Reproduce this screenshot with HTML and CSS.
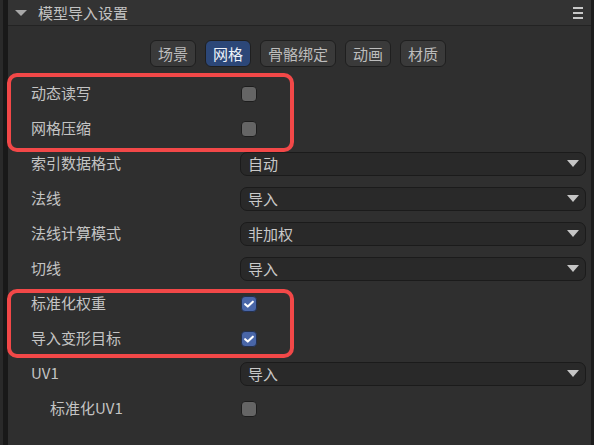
FILE: index.html
```html
<!DOCTYPE html>
<html lang="zh">
<head>
<meta charset="utf-8">
<link rel="stylesheet" href="styles.css">
</head>
<body>
<div class="frame">
  <div class="edge-left"></div>
  <div class="panel">
    <div class="header">
      <span class="caret"></span>
      <span class="title">模型导入设置</span>
      <span class="menu"><i></i><i></i><i></i></span>
    </div>
    <div class="content">
      <div class="tabs">
        <span class="tab">场景</span>
        <span class="tab active">网格</span>
        <span class="tab">骨骼绑定</span>
        <span class="tab">动画</span>
        <span class="tab">材质</span>
      </div>
      <div class="rows">
        <div class="row"><span class="label">动态读写</span><span class="check"></span></div>
        <div class="row"><span class="label">网格压缩</span><span class="check"></span></div>
        <div class="row"><span class="label">索引数据格式</span><span class="select">自动<b></b></span></div>
        <div class="row"><span class="label">法线</span><span class="select">导入<b></b></span></div>
        <div class="row"><span class="label">法线计算模式</span><span class="select">非加权<b></b></span></div>
        <div class="row"><span class="label">切线</span><span class="select">导入<b></b></span></div>
        <div class="row"><span class="label">标准化权重</span><span class="check on"><svg viewBox="0 0 16 16"><path d="M3.6 8.2 L6.6 10.9 L12.4 5.3" /></svg></span></div>
        <div class="row"><span class="label">导入变形目标</span><span class="check on"><svg viewBox="0 0 16 16"><path d="M3.6 8.2 L6.6 10.9 L12.4 5.3" /></svg></span></div>
        <div class="row"><span class="label">UV1</span><span class="select">导入<b></b></span></div>
        <div class="row"><span class="label indent">标准化UV1</span><span class="check"></span></div>
      </div>
    </div>
  </div>
  <div class="edge-right"></div>
</div>
<div class="mark mark1"></div>
<div class="mark mark2"></div>
</body>
</html>
```
FILE: styles.css
```css
html, body {
  margin: 0;
  padding: 0;
  background: #2e2e2e;
  font-family: "Noto Sans CJK SC", "Noto Sans", sans-serif;
  color: #c4c4c4;
  font-size: 15px;
}
.frame {
  display: flex;
  width: 594px;
  height: 445px;
  overflow: hidden;
}
.edge-left {
  width: 3px;
  background: #2a2a2a;
  border-right: 5px solid #191919;
}
.edge-right {
  width: 3px;
  background: #1c1c1c;
}
.panel {
  flex: 1;
  display: flex;
  flex-direction: column;
  background: #2f2f2f;
}
.header {
  height: 25px;
  background: #333333;
  border-bottom: 1px solid #232323;
  display: flex;
  align-items: center;
  position: relative;
}
.caret {
  width: 0;
  height: 0;
  border-left: 6px solid transparent;
  border-right: 6px solid transparent;
  border-top: 6px solid #a8a8a8;
  margin-left: 7px;
  margin-top: 1px;
}
.title {
  margin-left: 11px;
  line-height: 25px;
  color: #c2c2c2;
}
.menu {
  margin-left: auto;
  margin-right: 8px;
  display: flex;
  flex-direction: column;
  gap: 3px;
  margin-top: 1px;
}
.menu i {
  display: block;
  width: 10px;
  height: 2px;
  background: #c8c8c8;
}
.content {
  flex: 1;
  padding-top: 14px;
}
.tabs {
  display: flex;
  justify-content: center;
  gap: 9px;
  padding-right: 3px;
}
.tab {
  height: 25px;
  line-height: 25px;
  padding: 0 7px;
  border: 1px solid #1f1f1f;
  border-radius: 6px;
  background: #3a3a3a;
  color: #bdbdbd;
}
.tab.active {
  background: #2c4778;
  color: #eef2fa;
}
.rows {
  margin-top: 9px;
  padding-left: 23px;
  padding-right: 5px;
}
.row {
  height: 35px;
  display: flex;
  align-items: center;
}
.label {
  width: 209px;
  flex: none;
  margin-top: -2px;
}
.label.indent {
  padding-left: 19px;
  width: 190px;
}
.check {
  width: 14px;
  height: 14px;
  margin-left: 1px;
  border: 1px solid #1d1d1d;
  border-radius: 4px;
  background: #656565;
  display: flex;
}
.check.on {
  background: #4966a8;
  border-color: #22304f;
}
.check svg {
  width: 14px;
  height: 14px;
}
.check path {
  fill: none;
  stroke: #ffffff;
  stroke-width: 2.4;
  stroke-linecap: round;
  stroke-linejoin: round;
}
.select {
  flex: 1;
  height: 22px;
  border: 1px solid #1b1b1b;
  border-radius: 7px;
  background: #292929;
  padding-left: 7px;
  line-height: 22px;
  display: flex;
  align-items: center;
  color: #c8c8c8;
}
.select b {
  margin-left: auto;
  margin-right: 6px;
  width: 0;
  height: 0;
  border-left: 6.5px solid transparent;
  border-right: 6.5px solid transparent;
  border-top: 7px solid #c6c6c6;
}
.mark {
  position: absolute;
  left: 7px;
  width: 279px;
  border: 4px solid #f24848;
  border-radius: 10px;
  pointer-events: none;
}
.mark1 {
  top: 73px;
  height: 71px;
}
.mark2 {
  top: 289px;
  height: 61px;
}
```
